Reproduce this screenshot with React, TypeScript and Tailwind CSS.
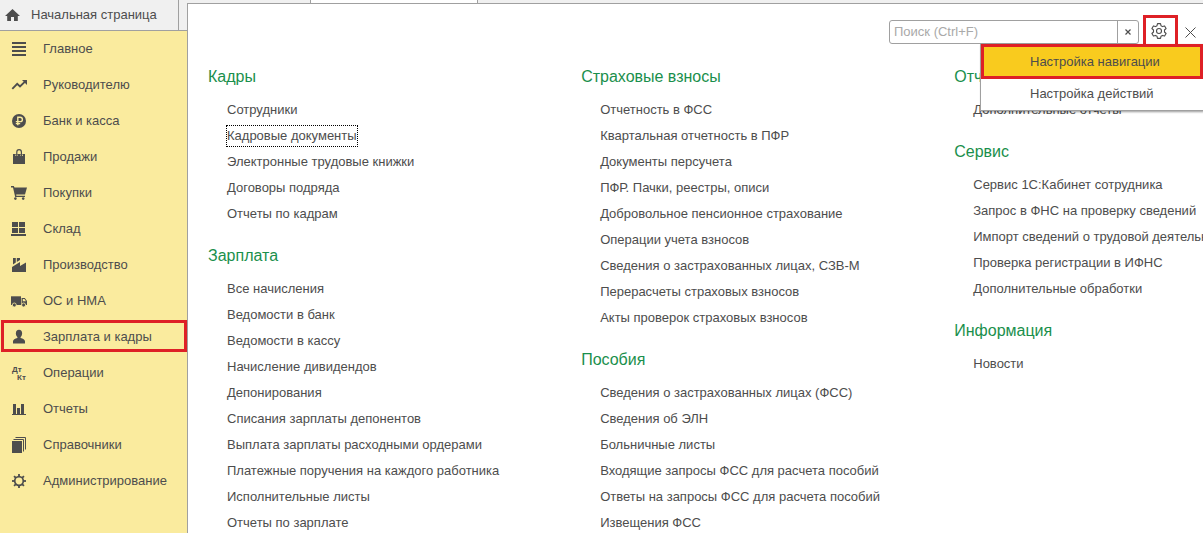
import { useState } from "react";
import type { ReactNode } from "react";

type Section = {
  name: string;
  icon: ReactNode;
};

type Group = {
  title: string;
  items: string[];
};

const gearTeeth = [0, 45, 90, 135, 180, 225, 270, 315];

const sections: Section[] = [
  {
    name: "Главное",
    icon: <path d="M0 2h14v2H0zM0 6h14v2H0zM0 10h14v2H0zM0 14h14v2H0z" />,
  },
  {
    name: "Руководителю",
    icon: (
      <>
        <path
          d="M0.3 12.8 5.2 7.8 8 10.4 13 5.6"
          fill="none"
          stroke="currentColor"
          strokeWidth="1.9"
        />
        <path d="M10 4h5v5z" />
      </>
    ),
  },
  {
    name: "Банк и касса",
    icon: (
      <>
        <circle cx="7" cy="9" r="7" />
        <path
          d="M5.8 13.3V5.2h2.4a2.2 2.2 0 0 1 0 4.4H3.8M3.8 11.6h4.4"
          fill="none"
          stroke="#faeb9e"
          strokeWidth="1.4"
        />
      </>
    ),
  },
  {
    name: "Продажи",
    icon: (
      <>
        <path d="M1 6h12v10H1z" />
        <path
          d="M4.6 8V6.4M9.6 8V6.4"
          fill="none"
          stroke="#faeb9e"
          strokeWidth="2.4"
        />
        <path
          d="M4.8 8V4a2.3 2.3 0 0 1 4.6 0v4"
          fill="none"
          stroke="currentColor"
          strokeWidth="1.2"
        />
      </>
    ),
  },
  {
    name: "Покупки",
    icon: (
      <>
        <path d="M-1 2h2.8l.7 1.6H15l-2 7H4.2l.2 1.2H13V13H3.2L1 3.4h-2z" />
        <circle cx="3.4" cy="14.6" r="1.3" />
        <circle cx="11.2" cy="14.6" r="1.3" />
      </>
    ),
  },
  {
    name: "Склад",
    icon: (
      <path d="M0 2h6v5H0zM7 2h6v5H7zM0 8h6v5H0zM7 8h6v5H7zM-1 14h15v2H-1z" />
    ),
  },
  {
    name: "Производство",
    icon: (
      <path d="M0 16v-5l8-5v4l6-3.6V16zM1 2h2.8v4.6L1 8.4zM4.8 2H8v2L4.8 6z" />
    ),
  },
  {
    name: "ОС и НМА",
    icon: (
      <>
        <path d="M-1 4.3H9V13H-1z" />
        <path
          fillRule="evenodd"
          d="M9.6 6h3.2L15 9v4H9.6zM10.8 7v2.2H14L12.4 7z"
        />
        <g stroke="#faeb9e" strokeWidth="0.8">
          <circle cx="2.3" cy="13" r="2" />
          <circle cx="11.6" cy="13" r="2" />
        </g>
      </>
    ),
  },
  {
    name: "Зарплата и кадры",
    icon: (
      <>
        <ellipse cx="7" cy="5.4" rx="3.1" ry="3.7" />
        <path d="M1 15.5v-2.3C1 11.6 3 10.8 5.4 10V8h3.2v2c2.4.8 4.4 1.6 4.4 3.2v2.3z" />
      </>
    ),
  },
  {
    name: "Операции",
    icon: (
      <g className="text-[8px] font-bold">
        <text x="0" y="8">
          Дт
        </text>
        <text x="5" y="16">
          Кт
        </text>
      </g>
    ),
  },
  {
    name: "Отчеты",
    icon: <path d="M0 14h14v1H0zM1 4h3v10H1zM5 8h3v6H5zM9 4h3v10H9z" />,
  },
  {
    name: "Справочники",
    icon: (
      <>
        <path d="M0 5h10v12H0z" />
        <path
          d="M1.5 3.5h10v12M3.5 1.5h10v12"
          fill="none"
          stroke="currentColor"
        />
      </>
    ),
  },
  {
    name: "Администрирование",
    icon: (
      <>
        <circle
          cx="7"
          cy="9"
          r="4.3"
          fill="none"
          stroke="currentColor"
          strokeWidth="1.7"
        />
        {gearTeeth.map((angle) => (
          <path
            key={angle}
            d="M6.1 2h1.8v2.6H6.1z"
            transform={`rotate(${angle} 7 9)`}
          />
        ))}
      </>
    ),
  },
];

const columns: Group[][] = [
  [
    {
      title: "Кадры",
      items: [
        "Сотрудники",
        "Кадровые документы",
        "Электронные трудовые книжки",
        "Договоры подряда",
        "Отчеты по кадрам",
      ],
    },
    {
      title: "Зарплата",
      items: [
        "Все начисления",
        "Ведомости в банк",
        "Ведомости в кассу",
        "Начисление дивидендов",
        "Депонирования",
        "Списания зарплаты депонентов",
        "Выплата зарплаты расходными ордерами",
        "Платежные поручения на каждого работника",
        "Исполнительные листы",
        "Отчеты по зарплате",
      ],
    },
  ],
  [
    {
      title: "Страховые взносы",
      items: [
        "Отчетность в ФСС",
        "Квартальная отчетность в ПФР",
        "Документы персучета",
        "ПФР. Пачки, реестры, описи",
        "Добровольное пенсионное страхование",
        "Операции учета взносов",
        "Сведения о застрахованных лицах, СЗВ-М",
        "Перерасчеты страховых взносов",
        "Акты проверок страховых взносов",
      ],
    },
    {
      title: "Пособия",
      items: [
        "Сведения о застрахованных лицах (ФСС)",
        "Сведения об ЭЛН",
        "Больничные листы",
        "Входящие запросы ФСС для расчета пособий",
        "Ответы на запросы ФСС для расчета пособий",
        "Извещения ФСС",
      ],
    },
  ],
  [
    {
      title: "Отчеты",
      items: ["Дополнительные отчеты"],
    },
    {
      title: "Сервис",
      items: [
        "Сервис 1С:Кабинет сотрудника",
        "Запрос в ФНС на проверку сведений",
        "Импорт сведений о трудовой деятельности",
        "Проверка регистрации в ИФНС",
        "Дополнительные обработки",
      ],
    },
    {
      title: "Информация",
      items: ["Новости"],
    },
  ],
];

function Sidebar() {
  const [active, setActive] = useState("Зарплата и кадры");

  return (
    <nav className="flex-1 bg-[#faeb9e] pt-px pl-px flex flex-col gap-1">
      {sections.map((section) => (
        <button
          key={section.name}
          onClick={() => setActive(section.name)}
          className={`h-8 shrink-0 flex items-center gap-[15px] pl-2 border-3 text-left whitespace-nowrap ${
            active === section.name ? "border-[#de2026]" : "border-transparent"
          }`}
        >
          <svg
            viewBox="0 0 16 16"
            fill="currentColor"
            className="w-4 h-4 shrink-0 overflow-visible text-[#4d4d4d]"
          >
            {section.icon}
          </svg>
          <span className="pt-0.5">{section.name}</span>
        </button>
      ))}
    </nav>
  );
}

function SettingsMenu() {
  return (
    <div className="absolute right-0 top-full z-10 w-[223px] bg-white border-l border-b border-[#a0a0a0] shadow-[1px_1px_2px_#00000066]">
      <button className="block w-full h-[35px] pl-[46px] text-left bg-[#f9cb1e] border-3 border-[#de2026]">
        Настройка навигации
      </button>
      <button className="block w-full h-[31px] pl-[49px] pb-0.5 text-left">
        Настройка действий
      </button>
    </div>
  );
}

function Toolbar() {
  const [query, setQuery] = useState("");
  const [menuOpen, setMenuOpen] = useState(true);

  return (
    <div className="relative flex justify-end items-end pt-[11px]">
      <div className="flex w-[250px] h-6 border border-[#a0a0a0] rounded-[3px]">
        <input
          type="text"
          aria-label="Поиск"
          placeholder="Поиск (Ctrl+F)"
          value={query}
          onChange={(e) => setQuery(e.target.value)}
          className="flex-1 min-w-0 px-1 outline-none placeholder:text-[#a9a9a9]"
        />
        <button
          aria-label="Очистить"
          onClick={() => setQuery("")}
          className="w-[21px] flex items-center justify-center border-l border-[#a0a0a0]"
        >
          <svg viewBox="0 0 6 6" className="w-[6px] h-[6px]">
            <path d="M.5.5l5 5m0-5l-5 5" stroke="#4d4d4d" strokeWidth="1.2" />
          </svg>
        </button>
      </div>
      <button
        aria-label="Настройки"
        onClick={() => setMenuOpen(!menuOpen)}
        className="w-[35px] h-[29px] ml-1 pr-[3px] flex items-center justify-center border-3 border-b-0 border-[#de2026]"
      >
        <svg
          viewBox="0 0 16 16"
          fill="none"
          stroke="#4d4d4d"
          strokeWidth="1.1"
          strokeLinejoin="round"
          className="w-4 h-4"
        >
          <path d="M6.5.6h3l.5 2.1 1.5.9 2.1-.7 1.5 2.6L13.5 7v2l1.6 1.5-1.5 2.6-2.1-.7-1.5.9-.5 2.1h-3L6 13.3l-1.5-.9-2.1.7-1.5-2.6L2.5 9V7L.9 5.5l1.5-2.6 2.1.7L6 2.7z" />
          <circle cx="8" cy="8" r="2.5" />
        </svg>
      </button>
      <button
        aria-label="Закрыть"
        className="w-[25px] h-6 flex items-center justify-center"
      >
        <svg viewBox="0 0 11 11" className="w-[11px] h-[11px]">
          <path d="M.5.5l10 10m0-10l-10 10" stroke="#4d4d4d" />
        </svg>
      </button>
      {menuOpen && <SettingsMenu />}
    </div>
  );
}

function MenuGroup({ title, items }: Group) {
  return (
    <section>
      <h2 className="text-base leading-6 mb-2 text-[#1a8f4c]">{title}</h2>
      <ul className="pl-[18px]">
        {items.map((item) => (
          <li key={item} className="h-[26px] flex items-center">
            <a
              href="#"
              className={`h-[22px] leading-5 border border-dotted ${
                item === "Кадровые документы"
                  ? "border-black"
                  : "border-transparent"
              }`}
            >
              {item}
            </a>
          </li>
        ))}
      </ul>
    </section>
  );
}

function App() {
  return (
    <div className="flex h-screen overflow-hidden font-['Liberation_Sans',Arial,sans-serif] text-[13px] text-[#4d4d4d] bg-[#f0f0f0]">
      <aside className="w-[187px] shrink-0 flex flex-col">
        <div className="h-[31px] shrink-0 flex border-b border-[#a0a0a0]">
          <a
            href="#"
            className="w-[179px] flex items-center gap-[10px] pl-[5px] border-r border-[#a0a0a0]"
          >
            <svg viewBox="0 0 16 14" className="w-4 h-[14px]">
              <path
                d="M7.5 1 0 8h2.2v5H6V9h3v4h3.8V8H15z"
                fill="#4d4d4d"
              />
            </svg>
            Начальная страница
          </a>
        </div>
        <Sidebar />
      </aside>

      <main className="flex-1 min-w-0 flex flex-col">
        <div className="h-[3px] shrink-0 flex pl-[123px]">
          <div className="w-[168px] bg-white border-x border-[#a0a0a0]" />
        </div>
        <div className="flex-1 min-h-0 bg-white border-t border-l border-[#a0a0a0]">
          <Toolbar />
          <div className="grid grid-cols-[3fr_3fr_2fr] pl-5 pt-[21px] whitespace-nowrap overflow-hidden">
            {columns.map((groups) => (
              <div
                key={groups[0].title}
                className="min-w-0 flex flex-col gap-[17px]"
              >
                {groups.map((group) => (
                  <MenuGroup key={group.title} {...group} />
                ))}
              </div>
            ))}
          </div>
        </div>
      </main>
    </div>
  );
}

export default App;
